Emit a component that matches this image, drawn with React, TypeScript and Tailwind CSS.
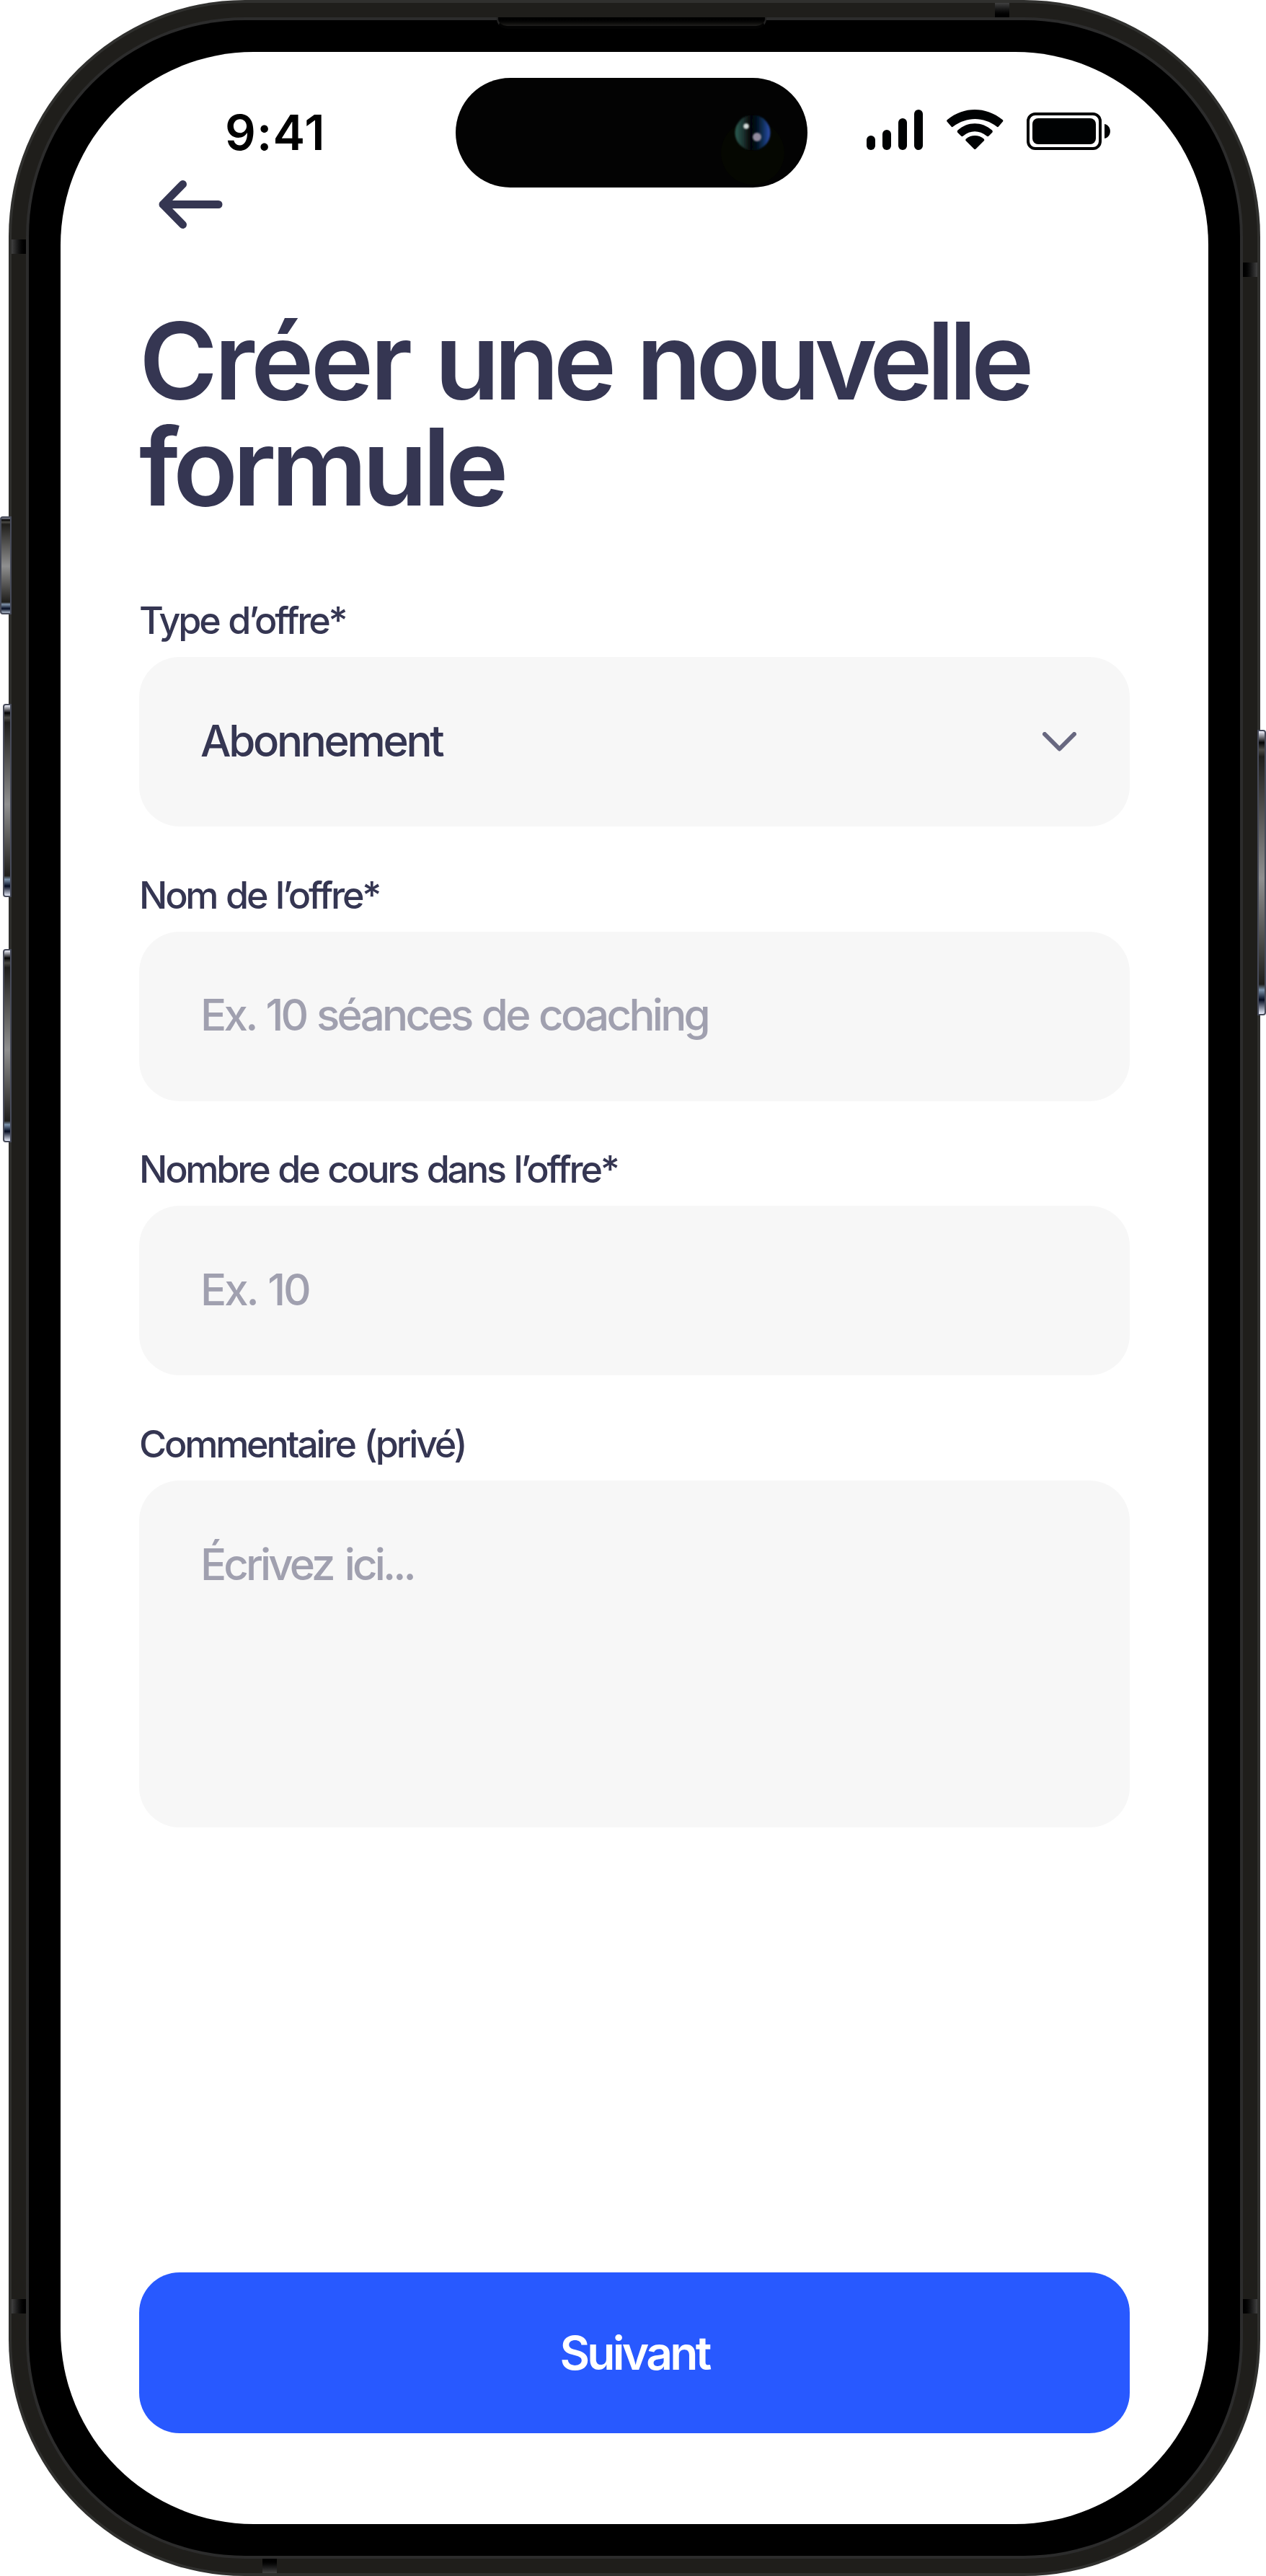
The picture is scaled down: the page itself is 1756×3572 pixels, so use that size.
import React from "react";

const TALL_KEY =
  "bg-[linear-gradient(180deg,#f2f4ff_0%,#050505_4%,#4b4a45_6.5%,#1f1e1b_9%,#8f8f8f_52%,#1f1e1b_89.5%,#7d93ab_91.5%,#030a1f_95%,#e8edfa_100%)]";
const SHORT_KEY =
  "bg-[linear-gradient(180deg,#8f92a0_0px,#050505_3px,#4b4a46_6px,#1f1e1b_9px,#8f8f8f_67px,#1f1e1b_117px,#8194ab_120px,#030a1f_126px,#9aa6b8_131px)]";

function SideKey({ className }: { className: string }) {
  return <div className={`shrink-0 border-2 border-[#474b5a] ${className}`} />;
}

function Antenna({ className }: { className: string }) {
  return <div className={`size-5 from-[#414141] to-black ${className}`} />;
}

function Camera() {
  return (
    <svg className="size-full" viewBox="0 0 488 152">
      <defs>
        <linearGradient id="lens" x1="0" x2="1" y1="0" y2="0">
          <stop offset="0" stopColor="#2c5d52" />
          <stop offset="0.25" stopColor="#1b302d" />
          <stop offset="0.44" stopColor="#050505" />
          <stop offset="0.58" stopColor="#020a16" />
          <stop offset="0.75" stopColor="#0a2948" />
          <stop offset="0.96" stopColor="#2848a0" />
        </linearGradient>
        <filter id="glint" x="-50%" y="-50%" width="200%" height="200%">
          <feGaussianBlur stdDeviation="1" />
        </filter>
      </defs>
      <circle cx="412" cy="104" r="44" fill="#050701" />
      <circle cx="412" cy="76" r="24.500" fill="url(#lens)" filter="url(#glint)" />
      <circle cx="403" cy="67" r="3.800" fill="#d3dbd9" filter="url(#glint)" />
      <circle cx="418" cy="82" r="6" fill="#918b9e" filter="url(#glint)" />
    </svg>
  );
}

function StatusIcons() {
  return (
    <svg width="340" height="56" viewBox="0 0 340 56">
      <g fill="#000203">
        <rect x="2" y="36" width="12" height="20" rx="6" />
        <rect x="24" y="28" width="12" height="28" rx="6" />
        <rect x="46" y="12" width="12" height="44" rx="6" />
        <rect x="68" y="0" width="12" height="56" rx="6" />
        <path d="M113.500 16.500Q112.500 15.500 114 14C137 -4.600 167 -4.600 190.500 14Q192 15.500 191 16.500L185 23.500Q184 25 182.500 23.500C164 9.500 141 9.500 122 23.500Q120.500 25 119.500 23.500Z" />
        <path d="M128 31.500Q127 30 128.500 28.500C142 16 162 16 176 28.500Q177.500 30 176.500 31.500L171.500 36.500Q170 38 168.500 36.500C158 28.300 146 28.300 136 36.500Q134.500 38 133 36.500Z" />
        <path d="M139.500 43Q138.500 42 140 40.500C147 34.600 157.500 34.600 164.500 40.500Q166 42 165 43L153.500 54.500Q152.300 55.500 151 54.500Z" />
        <rect x="232" y="12" width="88" height="36" rx="8" />
        <path d="M332 20C342.500 22 342.500 38 332 40Z" />
      </g>
      <rect x="226" y="6" width="100" height="48" rx="10" fill="none" stroke="#000203" strokeWidth="4" />
    </svg>
  );
}

function Field({ label, children }: { label: string; children: React.ReactNode }) {
  return (
    <div className="flex flex-col gap-[22px]">
      <div className="whitespace-nowrap text-[52px] font-medium leading-[56px] tracking-[-3.200px] text-[#353652] [word-spacing:2px]">{label}</div>
      {children}
    </div>
  );
}

export default function App() {
  return (
    <div className="relative h-[3572px] w-[1756px] overflow-hidden bg-white px-3 pr-2 font-['Inter',sans-serif]">
      <div className="h-full rounded-[328px] bg-[#30302e] p-1">
        <div className="h-full rounded-[324px] bg-[#1f1e1b] p-5">
          <div className="h-full rounded-[304px] bg-[#2c2c2c] p-1">
            <div className="h-full rounded-[300px] bg-black p-11">
              <main className="flex h-full flex-col rounded-[268px] bg-white px-[109px] pb-[126px] pt-[76px]">
                <header className="flex h-[102px] shrink-0 items-start justify-between pl-[119px] pr-[27px]">
                  <span className="text-[67px] font-semibold leading-[72px] tracking-[1.200px] text-black">9:41</span>
                  <div className="pt-1">
                    <StatusIcons />
                  </div>
                </header>
                <svg className="ml-[27px] h-[68px] w-[92px] shrink-0" viewBox="0 0 92 68" fill="none" stroke="#353652" strokeWidth="11" strokeLinecap="round" strokeLinejoin="round">
                  <path d="M33.500 5.500L6 33.500L33.500 61.500M6 33.500H83" />
                </svg>
                <h1 className="mt-[110px] whitespace-nowrap text-[148px] font-semibold leading-[146.500px] tracking-[-8px] text-[#353652] [word-spacing:6px]">
                  <span className="tracking-[-4.800px]">Créer</span> une nouvelle
                  <br />
                  <span className="tracking-[-7px]">formule</span>
                </h1>
                <form className="mt-[112px] flex flex-col gap-[67.700px]">
                  <Field label="Type d’offre*">
                    <div className="flex h-[235px] items-center justify-between rounded-[56px] bg-[#f7f7f7] pl-[85px] pr-[74px]">
                      <span className="pb-1 text-[60px] font-medium tracking-[-3.300px] text-[#353652]">Abonnement</span>
                      <svg width="47" height="27" viewBox="0 0 47 27" fill="none" stroke="#686880" strokeWidth="6" strokeLinecap="round" strokeLinejoin="round">
                        <path d="M3 3L23.500 23.500L44 3" />
                      </svg>
                    </div>
                  </Field>
                  <Field label="Nom de l’offre*">
                    <div className="flex h-[235px] items-center rounded-[56px] bg-[#f7f7f7] pb-1 pl-[85px] text-[60px] font-medium tracking-[-3.700px] text-[#a0a0af] [word-spacing:2px]">Ex. 10 séances de coaching</div>
                  </Field>
                  <Field label="Nombre de cours dans l’offre*">
                    <div className="flex h-[235px] items-center rounded-[56px] bg-[#f7f7f7] pb-1 pl-[85px] text-[60px] font-medium tracking-[-3px] text-[#a0a0af] [word-spacing:2px]">Ex. 10</div>
                  </Field>
                  <Field label="Commentaire (privé)">
                    <div className="h-[481px] rounded-[56px] bg-[#f7f7f7] pl-[85px] pt-[71px] text-[60px] font-medium leading-[90px] tracking-[-3.900px] text-[#a0a0af] [word-spacing:4px]">Écrivez ici...</div>
                  </Field>
                </form>
                <button className="mt-auto flex h-[223px] shrink-0 items-center justify-center rounded-[56px] bg-[#2859ff] text-[64px] font-semibold tracking-[-3.700px] text-white">Suivant</button>
              </main>
            </div>
          </div>
        </div>
      </div>

      {/* Speaker slit and dynamic island */}
      <div className="absolute inset-x-0 top-6 flex flex-col items-center gap-[68px] pr-1">
        <div className="h-4 w-[374px] rounded-b-[14px] border-x-2 border-b-4 border-x-[#222] border-b-[#030303] bg-gradient-to-b from-black to-[#201f1d]" />
        <div className="h-[152px] w-[488px] overflow-hidden rounded-[76px] bg-[#030303]">
          <Camera />
        </div>
      </div>

      {/* Antenna bands */}
      <div className="absolute inset-x-0 top-1 flex justify-end pr-[356px]">
        <Antenna className="bg-gradient-to-b" />
      </div>
      <div className="absolute inset-x-0 bottom-1 flex pl-[364px]">
        <Antenna className="bg-gradient-to-t" />
      </div>
      <div className="absolute inset-y-0 left-4 flex flex-col justify-between pb-[364px] pt-[332px]">
        <Antenna className="bg-gradient-to-r" />
        <Antenna className="bg-gradient-to-r" />
      </div>
      <div className="absolute inset-y-0 right-3 flex flex-col justify-between py-[364px]">
        <Antenna className="bg-gradient-to-l" />
        <Antenna className="bg-gradient-to-l" />
      </div>

      {/* Side keys */}
      <div className="absolute inset-y-0 left-0 flex w-4 flex-col items-end pt-[716px]">
        <SideKey className={`mb-[124px] h-[136px] w-4 rounded-l-[4px] ${SHORT_KEY}`} />
        <SideKey className={`mb-[72px] h-[268px] w-3 rounded-l-[4px] ${TALL_KEY}`} />
        <SideKey className={`h-[268px] w-3 rounded-l-[4px] ${TALL_KEY}`} />
      </div>
      <div className="absolute inset-y-0 right-0 flex flex-col pt-[1012px]">
        <SideKey className={`h-[396px] w-3 rounded-r-[4px] ${TALL_KEY}`} />
      </div>
    </div>
  );
}
